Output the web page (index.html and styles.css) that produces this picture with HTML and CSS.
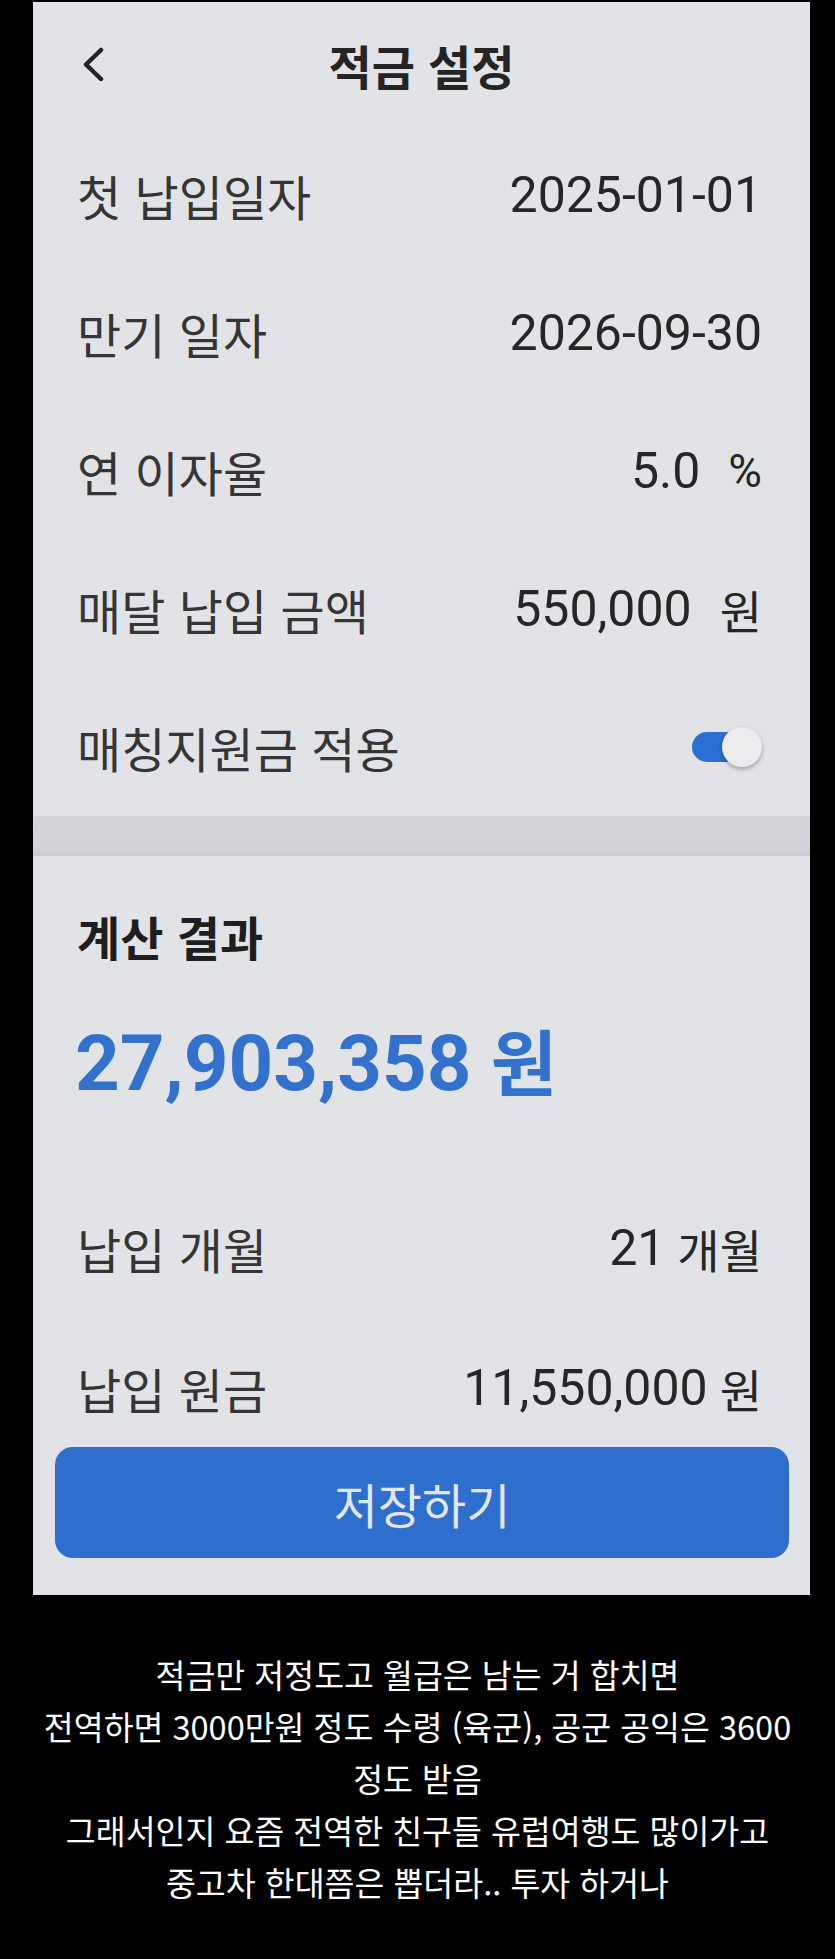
FILE: index.html
```html
<!DOCTYPE html>
<html lang="ko">
<head>
    <meta charset="UTF-8">
    <meta name="viewport" content="width=device-width, initial-scale=1.0">
    <title>적금 설정</title>
    <link rel="stylesheet" href="styles.css">
</head>
<body>
    <div class="screen">
        <!-- 상단 바 -->
        <div class="topbar">
            <span class="back">
                <svg width="22" height="36" viewBox="0 0 22 36">
                    <path d="M18 3 L3 17.5 L18 32" fill="none" stroke="#232323" stroke-width="4.5" stroke-linecap="round" stroke-linejoin="round"/>
                </svg>
            </span>
            <h1 class="title">적금 설정</h1>
            <span></span>
        </div>

        <!-- 입력 항목 -->
        <div class="form">
            <div class="row">
                <span class="label">첫 납입일자</span>
                <span class="value">2025-01-01</span>
            </div>
            <div class="row">
                <span class="label">만기 일자</span>
                <span class="value">2026-09-30</span>
            </div>
            <div class="row">
                <span class="label">연 이자율</span>
                <span class="value">5.0<span class="unit unit-wide">%</span></span>
            </div>
            <div class="row">
                <span class="label">매달 납입 금액</span>
                <span class="value">550,000<span class="unit unit-wide">원</span></span>
            </div>
            <div class="row">
                <span class="label">매칭지원금 적용</span>
                <span class="toggle on"><span class="thumb"></span></span>
            </div>
        </div>

        <div class="divider"></div>

        <!-- 계산 결과 -->
        <div class="result">
            <h2 class="result-title">계산 결과</h2>
            <div class="total">27,903,358 <span class="total-unit">원</span></div>

            <div class="result-rows">
                <div class="row row-small">
                    <span class="label">납입 개월</span>
                    <span class="value">21 <span class="unit">개월</span></span>
                </div>
                <div class="row row-small">
                    <span class="label">납입 원금</span>
                    <span class="value">11,550,000 <span class="unit">원</span></span>
                </div>
            </div>

            <button class="save">저장하기</button>
        </div>
    </div>

    <p class="caption">
        적금만 저정도고 월급은 남는 거 합치면<br>
        전역하면 3000만원 정도 수령 (육군), 공군 공익은 3600<br>
        정도 받음<br>
        그래서인지 요즘 전역한 친구들 유럽여행도 많이가고<br>
        중고차 한대쯤은 뽑더라.. 투자 하거나
    </p>
</body>
</html>
```

FILE: styles.css
```css
/* 기본 */
body {
    margin: 0;
    background-color: #000;
    font-family: "Noto Sans CJK KR", "Noto Sans", sans-serif;
    color: #333;
}

.screen {
    width: 777px;
    margin: 2px 0 0 33px;
    background-color: #e2e3e7;
}

/* 상단 바 */
.topbar {
    display: grid;
    grid-template-columns: 1fr auto 1fr;
    align-items: center;
    height: 124px;
}

.back {
    display: flex;
    padding-left: 50px;
    padding-top: 2px;
}

.title {
    margin: 0;
    font-size: 47px;
    font-weight: 700;
    color: #242424;
    line-height: 1;
}

/* 입력 항목 */
.row {
    display: flex;
    justify-content: space-between;
    align-items: center;
    height: 138px;
    padding: 0 48px 0 44px;
}

.label {
    font-size: 48px;
    color: #353535;
}

.value {
    font-family: Roboto, "Noto Sans CJK KR", sans-serif;
    font-size: 50px;
    color: #262626;
    display: flex;
    align-items: center;
}

.unit {
    font-family: "Noto Sans CJK KR", sans-serif;
    font-size: 46px;
    margin-left: 12px;
}

.unit-wide {
    margin-left: 28px;
    font-family: Roboto, "Noto Sans CJK KR", sans-serif;
}

/* 토글 */
.toggle {
    position: relative;
    width: 70px;
    height: 46px;
}

.toggle.on::before {
    content: "";
    position: absolute;
    left: 0;
    top: 8px;
    width: 60px;
    height: 30px;
    border-radius: 15px;
    background-color: #2b6fd0;
}

.thumb {
    position: absolute;
    right: 0;
    top: 3px;
    width: 40px;
    height: 40px;
    border-radius: 50%;
    background-color: #ececee;
    box-shadow: 0 2px 4px rgba(0, 0, 0, 0.3);
}

.divider {
    height: 40px;
    background: linear-gradient(#d4d5d9, #d2d3d8 85%, #c9c9d8);
}

/* 계산 결과 */
.result {
    padding: 50px 0 37px;
}

.result-title {
    margin: 0;
    padding-left: 44px;
    font-size: 47px;
    font-weight: 700;
    line-height: 60px;
    color: #1e1e1e;
}

.total {
    margin-top: 43px;
    padding-left: 42px;
    font-family: Roboto, "Noto Sans CJK KR", sans-serif;
    font-size: 78px;
    font-weight: 700;
    line-height: 100px;
    color: #3272cd;
}

.total-unit {
    font-family: "Noto Sans CJK KR", sans-serif;
    font-size: 72px;
}

.result-rows {
    display: flex;
    flex-direction: column;
    gap: 30px;
    margin-top: 79px;
}

.row-small {
    height: 110px;
}

.save {
    display: block;
    width: 734px;
    height: 111px;
    margin: 4px 0 0 22px;
    border: none;
    border-radius: 18px;
    background-color: #2e6fcd;
    color: #e2e6ee;
    font-family: "Noto Sans CJK KR", sans-serif;
    font-size: 48px;
}

/* 하단 글 */
.caption {
    margin: 0;
    padding-top: 53px;
    text-align: center;
    font-size: 32.5px;
    line-height: 52px;
    color: #fff;
}
```
